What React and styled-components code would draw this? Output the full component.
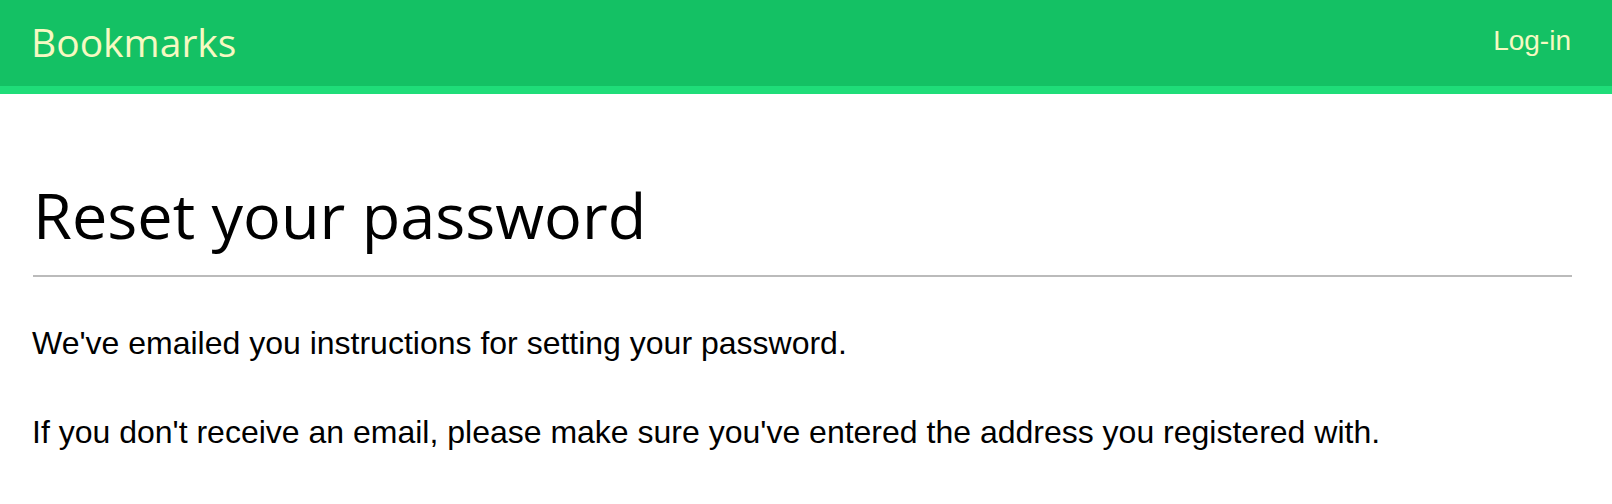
import React from "react";
import styled, { createGlobalStyle } from "styled-components";

const Global = createGlobalStyle`
  html, body { margin: 0; padding: 0; background: #ffffff; }
  body { font-family: "Liberation Sans", Arial, sans-serif; color: #000; }
`;

const Header = styled.header`
  display: flex;
  align-items: center;
  justify-content: space-between;
  height: 86px;
  padding: 0 41px 0 31px;
  background: #14c164;
  border-bottom: 8px solid #1fdd79;
`;

const Brand = styled.a`
  font-family: "Open Sans", Lato, sans-serif;
  font-size: 39px;
  color: #f6f9c2;
  text-decoration: none;
  padding-bottom: 4px;
`;

const NavLink = styled.a`
  font-family: "Liberation Sans", Arial, sans-serif;
  font-size: 28px;
  color: #f6f9c2;
  text-decoration: none;
  padding-bottom: 4px;
`;

const Main = styled.main`
  padding: 0 40px 0 30px;
`;

const Title = styled.h1`
  font-family: "Open Sans", Lato, sans-serif;
  font-weight: 400;
  font-size: 63px;
  line-height: 76px;
  margin: 83px 0 0 3px;
  padding-bottom: 22px;
  border-bottom: 2px solid #bbbbbb;
`;

const Text = styled.p`
  font-size: 32px;
  line-height: 37px;
  margin: 48px 0 0 2px;
  & + & { margin-top: 52px; }
`;

export default function App() {
  return (
    <>
      <Global />
      <Header>
        <Brand href="#">Bookmarks</Brand>
        <NavLink href="#">Log-in</NavLink>
      </Header>
      <Main>
        <Title>Reset your password</Title>
        <Text>We've emailed you instructions for setting your password.</Text>
        <Text>If you don't receive an email, please make sure you've entered the address you registered with.</Text>
      </Main>
    </>
  );
}
